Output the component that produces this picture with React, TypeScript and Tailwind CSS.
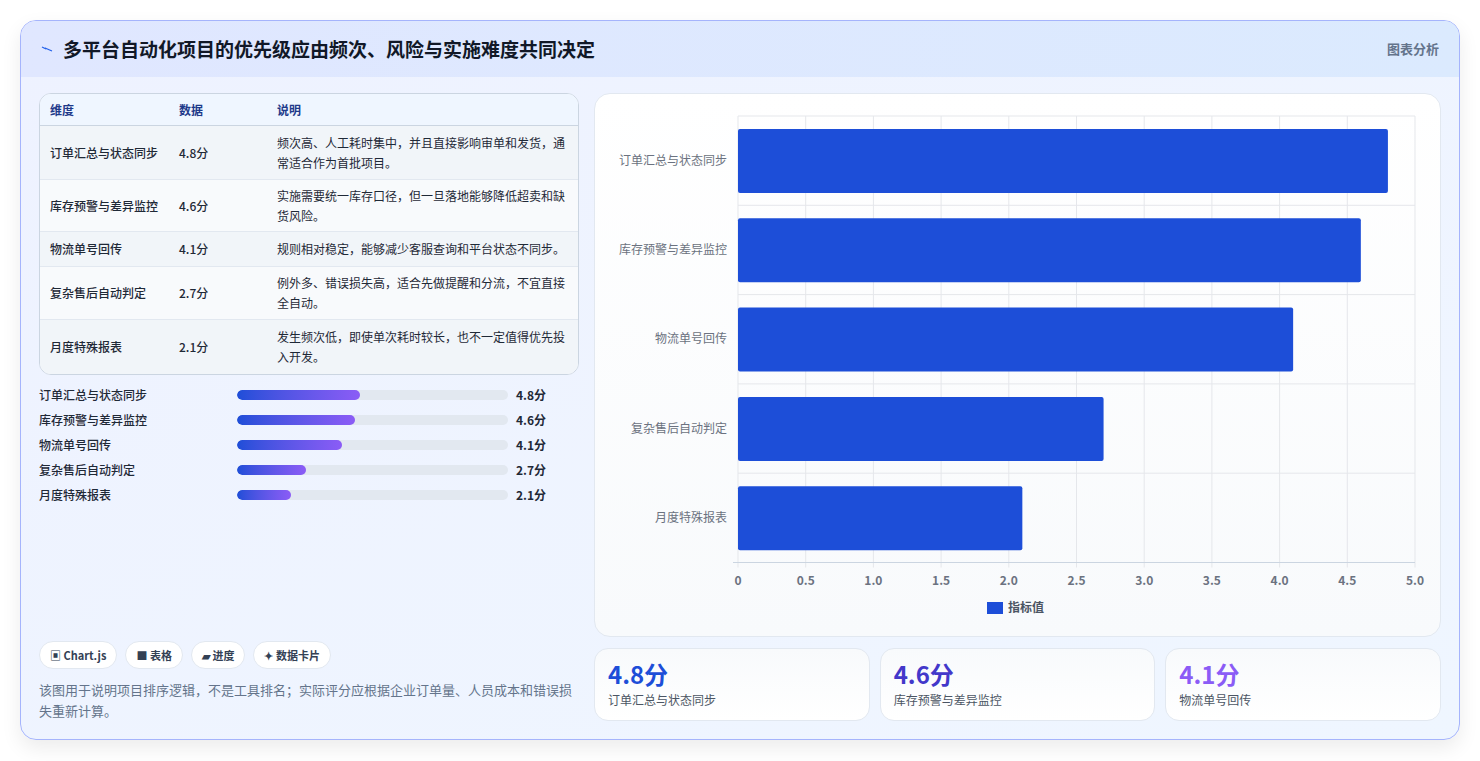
import React from "react";

const rows = [
  ["订单汇总与状态同步", "4.8分", "频次高、人工耗时集中，并且直接影响审单和发货，通常适合作为首批项目。", 4.8],
  ["库存预警与差异监控", "4.6分", "实施需要统一库存口径，但一旦落地能够降低超卖和缺货风险。", 4.6],
  ["物流单号回传", "4.1分", "规则相对稳定，能够减少客服查询和平台状态不同步。", 4.1],
  ["复杂售后自动判定", "2.7分", "例外多、错误损失高，适合先做提醒和分流，不宜直接全自动。", 2.7],
  ["月度特殊报表", "2.1分", "发生频次低，即使单次耗时较长，也不一定值得优先投入开发。", 2.1],
] as const;

const rowH = [54, 52, 35, 53, 54];

function Chart() {
  const x0 = 143, pw = 677, y0 = 22, band = 89.3;
  const ticks = [0, 0.5, 1, 1.5, 2, 2.5, 3, 3.5, 4, 4.5, 5];
  return (
    <svg width="845" height="543" className="block">
      {ticks.map((t, i) => {
        const x = x0 + (t / 5) * pw;
        return (
          <g key={i}>
            <line x1={x} x2={x} y1={y0} y2={y0 + band * 5 + 5} stroke="#e5e7eb" strokeWidth="1" />
            <text x={x} y={491} textAnchor="middle" fontSize="12" fill="#6b7280" fontWeight="600">{t === 0 ? "0" : t.toFixed(1)}</text>
          </g>
        );
      })}
      {[0, 1, 2, 3, 4].map((i) => (
        <line key={i} x1={x0} x2={x0 + pw} y1={y0 + band * i} y2={y0 + band * i} stroke="#e5e7eb" />
      ))}
      <line x1={x0 - 5} x2={x0 + pw} y1={y0 + band * 5} y2={y0 + band * 5} stroke="#cbd5e1" />
      {rows.map((r, i) => (
        <g key={i}>
          <rect x={x0} y={y0 + band * i + 13} width={(r[3] / 5) * pw} height={64} fill="#1d4ed8" rx="2" />
          <text x={x0 - 11} y={y0 + band * i + band / 2 + 4} textAnchor="end" fontSize="12" fill="#6b7280">{r[0]}</text>
        </g>
      ))}
      <rect x={392} y={508} width={16} height={12} fill="#1d4ed8" />
      <text x={413} y={518} fontSize="12" fill="#4b5563" fontWeight="600">指标值</text>
    </svg>
  );
}

export default function App() {
  return (
    <div className="w-[1480px] h-[761px] bg-white pt-[20px] px-[20px]" style={{ fontFamily: '"Noto Sans CJK SC", "Noto Sans", sans-serif' }}>
      <div className="w-[1440px] h-[720px] rounded-2xl border border-[#a5b4fc] overflow-hidden bg-gradient-to-br from-[#eef2ff] to-[#eff6ff] shadow-[0_8px_20px_rgba(0,0,0,0.08)] flex flex-col">
        <div className="h-[56px] shrink-0 bg-gradient-to-r from-[#e0e7ff] to-[#dbeafe] flex items-center justify-between px-[20px]">
          <div className="flex items-center gap-[10px]">
            <svg width="12" height="8" viewBox="0 0 12 8"><path d="M1 2 L5 4 L4 3 L11 6" stroke="#2563eb" strokeWidth="1.3" fill="none" /></svg>
            <span className="text-[19px] font-bold text-[#111827]">多平台自动化项目的优先级应由频次、风险与实施难度共同决定</span>
          </div>
          <span className="text-[13px] font-semibold text-[#64748b]">图表分析</span>
        </div>
        <div className="flex-1 flex gap-[15px] pl-[18px] pr-[18px] pt-[16px] pb-[18px]">
          <div className="w-[542px] flex flex-col">
            <div className="rounded-[12px] border border-[#cbd5e1] overflow-hidden bg-white text-[12px] text-[#1f2937]">
              <div className="h-[32px] flex items-center bg-[#eff6ff] border-b border-[#cbd5e1] text-[#1e3a8a] font-semibold">
                <div className="w-[139px] pl-[10px]">维度</div>
                <div className="w-[98px]">数据</div>
                <div className="flex-1">说明</div>
              </div>
              {rows.map((r, i) => (
                <div key={i} className={`flex items-center border-b border-[#e2e8f0] last:border-b-0 ${i % 2 ? "bg-[#f8fafc]" : "bg-[#f1f5f9]"}`} style={{ height: rowH[i] }}>
                  <div className="w-[139px] pl-[10px] font-medium">{r[0]}</div>
                  <div className="w-[98px] font-medium">{r[1]}</div>
                  <div className="flex-1 pr-[10px] leading-[20px]">{r[2]}</div>
                </div>
              ))}
            </div>
            <div className="mt-[10px] flex flex-col gap-[5px]">
              {rows.map((r, i) => (
                <div key={i} className="h-[20px] flex items-center text-[12px] text-[#1f2937]">
                  <div className="w-[198px] font-medium">{r[0]}</div>
                  <div className="w-[271px] h-[10px] rounded-full bg-[#e2e8f0] overflow-hidden">
                    <div className="h-full rounded-full bg-gradient-to-r from-[#1d4ed8] to-[#8b5cf6]" style={{ width: `${r[3] * 25.6}px` }} />
                  </div>
                  <div className="ml-[8px] font-bold">{r[1]}</div>
                </div>
              ))}
            </div>
            <div className="flex-1" />
            <div className="flex gap-[8px] text-[11px] font-bold text-[#334155]">
              {["▣ Chart.js", "■ 表格", "▰ 进度", "✦ 数据卡片"].map((c) => (
                <span key={c} className="h-[28px] px-[10px] flex items-center rounded-full bg-white border border-[#e2e8f0]">{c}</span>
              ))}
            </div>
            <p className="mt-[10px] text-[13px] leading-[21px] text-[#64748b]">该图用于说明项目排序逻辑，不是工具排名；实际评分应根据企业订单量、人员成本和错误损失重新计算。</p>
          </div>
          <div className="flex-1 flex flex-col gap-[11px]">
            <div className="h-[544px] rounded-2xl border border-[#e2e8f0] bg-gradient-to-b from-white to-[#f8fafc] overflow-hidden">
              <Chart />
            </div>
            <div className="flex gap-[10px]">
              {[["4.8分", "订单汇总与状态同步", "text-[#1d4ed8]"], ["4.6分", "库存预警与差异监控", "text-[#4338ca]"], ["4.1分", "物流单号回传", "text-[#8b5cf6]"]].map(([v, l, c]) => (
                <div key={l} className="flex-1 h-[73px] rounded-[14px] border border-[#e2e8f0] bg-gradient-to-b from-[#f8fafc] to-white px-[13px] pt-[10px]">
                  <div className={`text-[24px] leading-[30px] font-bold ${c}`}>{v}</div>
                  <div className="text-[12px] text-[#4b5563] mt-[2px]">{l}</div>
                </div>
              ))}
            </div>
          </div>
        </div>
      </div>
    </div>
  );
}
